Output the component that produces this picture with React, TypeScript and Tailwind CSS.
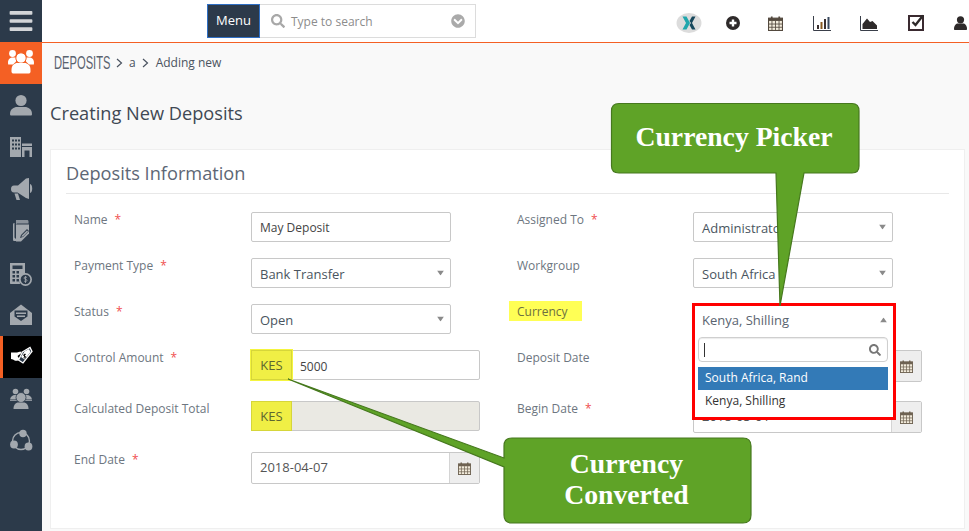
import React from "react";
import { FaBars, FaSearch, FaChevronCircleDown } from "react-icons/fa";

const Star = () => <span className="ml-[7px] text-[#f05050]">*</span>;

const Caret = ({ up = false }: { up?: boolean }) => (
  <svg width="7" height="5" viewBox="0 0 7 5" className="absolute right-[6px] top-1/2 -translate-y-1/2">
    <polygon points={up ? "0,5 7,5 3.5,0" : "0,0 7,0 3.5,5"} fill="#8a8a8a" />
  </svg>
);

const CalendarIcon = ({ size = 14, color = "#6e6252", fill = "#f3ecdc" }: { size?: number; color?: string; fill?: string }) => (
  <svg width={size} height={size} viewBox="0 0 14 14">
    <rect x="0.5" y="2" width="13" height="11.5" fill={fill} stroke={color} />
    <rect x="0.5" y="2" width="13" height="2.6" fill={color} />
    <path d="M3.5 0.5V3M10.5 0.5V3" stroke={color} strokeWidth="1.6" />
    <path d="M0.5 7.5H13.5M0.5 10.5H13.5M3.7 4.5V13.5M7 4.5V13.5M10.3 4.5V13.5" stroke={color} strokeWidth="0.8" />
  </svg>
);

const Label = ({ text, req }: { text: string; req?: boolean }) => (
  <div className="text-[12px] leading-[16px] text-[#6d7680] whitespace-nowrap">
    {text}
    {req && <Star />}
  </div>
);

const Select = ({ value }: { value: string }) => (
  <div className="relative w-[200px] h-[30px] bg-white border border-[#c8c8c8] rounded-[2px] flex items-center pl-[8px] pt-[3px] text-[13px] text-[#4a5560]">
    {value}
    <Caret />
  </div>
);

const TextBox = ({ value }: { value: string }) => (
  <div className="w-[200px] h-[30px] bg-white border border-[#c8c8c8] rounded-[2px] flex items-center pl-[8px] pt-[2px] text-[12px] text-[#444]">
    {value}
  </div>
);

const DateBox = ({ value }: { value: string }) => (
  <div className="w-[229px] h-[32px] bg-white border border-[#c8c8c8] rounded-[2px] flex text-[13px] text-[#555]">
    <div className="flex-1 flex items-center pl-[8px]">{value}</div>
    <div className="w-[30px] bg-[#eeeeee] border-l border-[#d4d4d4] flex items-center justify-center">
      <CalendarIcon size={13} />
    </div>
  </div>
);

const Amount = ({ value, disabled, ring }: { value?: string; disabled?: boolean; ring?: boolean }) => (
  <div className={`w-[229px] h-[30px] border border-[#c8c8c8] rounded-[2px] flex text-[12px] ${disabled ? "bg-[#eae9e3]" : "bg-white"}`}>
    <div className={`w-[41px] -ml-px -my-px bg-[#f0ef45] border-[#d6d63a] border flex items-center justify-center pt-[2px] text-[13px] text-[#5c6630] ${ring ? "outline outline-1 outline-[#f5f53f]" : ""}`}>
      KES
    </div>
    <div className="flex-1 flex items-center pl-[8px] pt-[3px] text-[#444]">{value}</div>
  </div>
);

const Row = ({ h, label, children }: { h: number; label: React.ReactNode; children: React.ReactNode }) => (
  <div className="flex" style={{ height: h }}>
    <div className="w-[177px]">{label}</div>
    <div className="relative">{children}</div>
  </div>
);

const NavIcon = ({ children, active, orange }: { children: React.ReactNode; active?: boolean; orange?: boolean }) => (
  <div className={`relative h-[42px] ${orange ? "bg-[#f46024]" : active ? "bg-black" : ""}`}>
    {active && <span className="absolute left-0 top-0 w-[3px] h-full bg-[#f46024]" />}
    <svg width="42" height="42" viewBox="0 0 42 42" fill={orange || active ? "#ffffff" : "#a3a8ae"}>
      {children}
    </svg>
  </div>
);

const BG = "#2c3a4a";

export default function App() {
  return (
    <div className="relative w-[969px] h-[531px] overflow-hidden flex bg-[#f9f9f9] font-['Open_Sans',sans-serif]">
      <aside className="w-[42px] h-full bg-[#2c3a4a] shrink-0">
        <div className="h-[42px] flex items-center justify-center">
          <FaBars className="text-[26px] text-[#d3d5d8]" />
        </div>
        <NavIcon orange>
          <circle cx="12.5" cy="11.5" r="3.4" />
          <circle cx="29.5" cy="11.5" r="3.4" />
          <path d="M8 21c0-4 2-5.5 5-5.5h3v4l-3 3H8.2ZM34 21c0-4-2-5.5-5-5.5h-3v4l3 3h4.8Z" />
          <circle cx="21" cy="16" r="5.2" stroke="#f46024" strokeWidth="1" />
          <path d="M11.5 28c0-5 3-7 6-7h7c3 0 6 2 6 7v1.5c0 1.5-1 2-2 2h-15c-1 0-2-.5-2-2Z" stroke="#f46024" strokeWidth="0" />
        </NavIcon>
        <NavIcon>
          <circle cx="21" cy="16.5" r="5.6" />
          <path d="M10 30c0-5 4-7 7-7h8c3 0 7 2 7 7 0 1-.5 1.5-1.5 1.5h-19C10.500 31.500 10 31 10 30Z" />
        </NavIcon>
        <NavIcon>
          <path d="M10 11h11v20H10Z" />
          <path d="M22 17.500h10v2.500H22ZM22 21h10v10h-2.500v-6.500h-5V31H22Z" />
          <g fill={BG}>
            <rect x="12" y="13.500" width="2" height="2" /><rect x="15" y="13.500" width="2" height="2" /><rect x="18" y="13.500" width="2" height="2" />
            <rect x="12" y="17.500" width="2" height="2" /><rect x="15" y="17.500" width="2" height="2" /><rect x="18" y="17.500" width="2" height="2" />
            <rect x="12" y="21.500" width="2" height="2" /><rect x="15" y="21.500" width="2" height="2" /><rect x="18" y="21.500" width="2" height="2" />
          </g>
        </NavIcon>
        <NavIcon>
          <path d="M26 10.500l3 -.5v21l-3-1-8.500-5.500H14c-2 0-3-1.500-3-3.500s1-3.500 3-3.500h4Z" />
          <path d="M30 16c1.500.5 2.200 2 2.200 4.500S31.500 24.500 30 25Z" />
          <path d="M14.500 25.500h3.500l2 6.500h-3.500Z" />
        </NavIcon>
        <NavIcon>
          <path d="M16 10h11c1 0 1.500.5 1.500 1.500v2H18c-1.500 0-2 .5-2 2Z" opacity="0.8" />
          <path d="M13 14.500c0-1 .5-1.500 1.500-1.500v14.500L18 31h-3.500C13.500 31 13 30.500 13 29.500Z" />
          <path d="M16 14.500h13v9l-8 8h-5Z" />
          <path d="M20 28l1-3 6-6 2 2-6 6Z" fill={BG} />
          <path d="M21.500 26.800l.4-1.300 5.100-5 1 1-5.100 5Z" />
        </NavIcon>
        <NavIcon>
          <path d="M10 11h15v12h-1a7 7 0 0 0-4 9H11c-.6 0-1-.4-1-1Z" />
          <g fill={BG}>
            <rect x="12.500" y="13.500" width="10" height="3.500" />
            <rect x="12.500" y="19" width="2.500" height="2.500" /><rect x="16.500" y="19" width="2.500" height="2.500" />
            <rect x="12.500" y="23" width="2.500" height="2.500" /><rect x="16.500" y="23" width="2.500" height="2.500" />
            <rect x="12.500" y="27" width="2.500" height="2.500" /><rect x="16.500" y="27" width="2.500" height="2.500" />
          </g>
          <circle cx="25.500" cy="27.500" r="6.500" />
          <circle cx="25.500" cy="27.500" r="4.800" fill={BG} />
          <path d="M27 25.500c-1-.8-3-.6-3 .6 0 1.500 3 .8 3 2.300 0 1.200-2 1.400-3 .6M25.500 24v7" stroke="#a3a8ae" strokeWidth="0.8" fill="none" />
        </NavIcon>
        <NavIcon>
          <path d="M21 10.500L32 19v12H10V19Z" />
          <path d="M14.500 16.500h13v6l-6.500 4.500-6.500-4.500Z" fill={BG} />
          <path d="M16 18.500h10v1.500H16ZM17 21.500h8v1.500h-8Z" />
        </NavIcon>
        <NavIcon active>
          <path d="M21.500 16.500L30 11.500l2 4 -9 11.500-4.500-3 4-8" fill={BG} stroke="#ffffff" strokeWidth="1.300" />
          <path d="M24.500 15.500L29 13l1.500 3-6 7.500-3.500-2.500Z" />
          <path d="M11 16.500h6l3.500-1 1 1.500-4 3 2 3-1.500 1.500c-2 .5-3 .5-5-1l-2-.5Z" />
          <path d="M24.500 18v3.500M26 18.500c-1-.5-2.500-.2-2.500.8s2.500.7 2.500 1.700-1.500 1.200-2.500.8" stroke="#000" strokeWidth="0.9" fill="none" />
        </NavIcon>
        <NavIcon>
          <circle cx="15.500" cy="13.500" r="2.800" />
          <circle cx="26.500" cy="13.500" r="2.800" />
          <path d="M10 21.500c.5-3 2.500-4.500 5-4.500h1.500l1 3-2 1.500ZM32 21.500c-.5-3-2.500-4.500-5-4.500h-1.500l-1 3 2 1.500Z" />
          <path d="M10 22h22v.8H10Z" />
          <circle cx="21" cy="19.500" r="5" stroke={BG} strokeWidth="0.8" />
          <path d="M13.500 31c0-4 2-6.500 5-6.500h5c3 0 5 2.500 5 6.500Z" />
        </NavIcon>
        <NavIcon>
          <circle cx="21" cy="21" r="8.500" fill="none" stroke="#a3a8ae" strokeWidth="1.400" />
          <circle cx="23" cy="13.500" r="3.700" />
          <circle cx="14" cy="24.500" r="3.900" />
          <circle cx="28.500" cy="26.500" r="3.900" />
        </NavIcon>
      </aside>

      <div className="flex-1 min-w-0 flex flex-col">
        <header className="h-[43px] shrink-0 bg-white border-b border-[#f46024] relative flex items-center">
          <div className="ml-[165px] flex h-[34px]">
            <div className="w-[53px] bg-[#2c3a4a] border border-[#2f6fc4] text-white text-[13px] font-medium flex items-center justify-center">Menu</div>
            <div className="w-[216px] border border-[#dcdcdc] border-l-0 flex items-center pl-[11px] pr-[10px] text-[12px] text-[#8c8c8c]">
              <FaSearch className="text-[14px] text-[#a8a8a8] mr-[6px]" />
              <span className="flex-1 pt-[2px]">Type to search</span>
              <FaChevronCircleDown className="text-[14px] text-[#aaa]" />
            </div>
          </div>
          <div className="absolute left-[634px] top-[13px] flex items-center text-[#2e2a2a]">
            <svg width="26" height="20" viewBox="0 0 26 20">
              <ellipse cx="13" cy="10" rx="12.500" ry="10" fill="#dcdcdc" />
              <path d="M6.500 3.500L10.500 3.500L14 10L10.500 16.500L6.500 16.500L10 10Z" fill="#1fa6ac" />
              <path d="M19.500 3.500L16 3.500L13.500 8L15 10L13.500 12L16 16.500L19.500 16.500L16 10Z" fill="#17485c" />
            </svg>
            <svg width="14" height="14" viewBox="0 0 14 14" className="ml-[24px]">
              <circle cx="7" cy="7" r="7" fill="#2e2a2a" />
              <path d="M7 3.500v7M3.500 7h7" stroke="#fff" strokeWidth="2.400" />
            </svg>
            <span className="ml-[28px]"><CalendarIcon size={15} color="#544a3f" /></span>
            <svg width="18" height="15" viewBox="0 0 18 15" className="ml-[30px]">
              <path d="M0.500 0V14.500H18" stroke="#3a3f4a" fill="none" />
              <rect x="4" y="9" width="2" height="4" fill="#3a3030" />
              <rect x="7.500" y="6" width="2" height="7" fill="#8a5a20" />
              <rect x="11" y="3" width="2" height="10" fill="#3a3030" />
              <rect x="14.500" y="1" width="2" height="12" fill="#3a4a60" />
            </svg>
            <svg width="18" height="15" viewBox="0 0 18 15" className="ml-[29px]">
              <path d="M0.500 0V14.500H18" stroke="#3a3f4a" fill="none" />
              <path d="M2.500 13V8L7 2.500L10 6L12.500 5L17 9.500V13Z" fill="#2e2a2a" />
            </svg>
            <svg width="18" height="18" viewBox="0 0 18 18" className="ml-[30px] -mt-[2px]">
              <rect x="1" y="3" width="14" height="14" fill="none" stroke="#3a2a30" strokeWidth="2" />
              <path d="M4.500 9l3 3L15 2.500" fill="none" stroke="#2e2a2a" strokeWidth="2.400" />
            </svg>
            <svg width="13" height="14" viewBox="0 0 13 14" className="ml-[28px]">
              <circle cx="6.500" cy="3.800" r="3.600" fill="#2e2a2a" />
              <path d="M0 13c0-3.500 2-5.500 4-5.500h5c2 0 4 2 4 5.500 0 .6-.4 1-1 1H1c-.6 0-1-.4-1-1Z" fill="#2e2a2a" />
            </svg>
          </div>
        </header>

        <div className="h-[41px] shrink-0 flex items-center pl-[12px] pb-[2px] text-[12px] text-[#4a5360]">
          <span className="inline-block origin-left scale-x-[0.62] w-[57px] text-[18px] leading-[20px] font-['Liberation_Sans',sans-serif] text-[#59626e] whitespace-nowrap">DEPOSITS</span>
          <svg width="7" height="10" viewBox="0 0 7 10" className="ml-[5px]"><path d="M1 1l4.500 4L1 9" fill="none" stroke="#4a5360" strokeWidth="1.200" /></svg>
          <span className="ml-[6px]">a</span>
          <svg width="7" height="10" viewBox="0 0 7 10" className="ml-[6px]"><path d="M1 1l4.500 4L1 9" fill="none" stroke="#4a5360" strokeWidth="1.200" /></svg>
          <span className="ml-[7px]">Adding new</span>
        </div>

        <h1 className="h-[65px] shrink-0 pl-[8px] pt-[16px] text-[18.200px] leading-[26px] text-[#3f4854]">Creating New Deposits</h1>

        <section className="ml-[8px] mr-[4px] h-[380px] shrink-0 bg-white border border-[#efefef] px-[15px]">
          <h2 className="h-[44px] pt-[10px] text-[18.200px] leading-[26px] text-[#5d6775] border-b border-[#e8e8e8]">Deposits Information</h2>
          <div className="flex pt-[18px]">
            <div className="w-[451px] pl-[8px]">
              <Row h={46} label={<Label text="Name" req />}><TextBox value="May Deposit" /></Row>
              <Row h={46} label={<Label text="Payment Type" req />}><Select value="Bank Transfer" /></Row>
              <Row h={46} label={<Label text="Status" req />}><Select value="Open" /></Row>
              <Row h={51} label={<Label text="Control Amount" req />}><Amount value="5000" ring /></Row>
              <Row h={51} label={<Label text="Calculated Deposit Total" />}><Amount disabled /></Row>
              <Row h={46} label={<Label text="End Date" req />}><DateBox value="2018-04-07" /></Row>
            </div>
            <div className="flex-1">
              <div className="flex h-[46px]"><div className="w-[176px]"><Label text="Assigned To" req /></div><Select value="Administrator" /></div>
              <div className="flex h-[46px]"><div className="w-[176px]"><Label text="Workgroup" /></div><Select value="South Africa" /></div>
              <div className="flex h-[46px]">
                <div className="w-[176px]">
                  <span className="-ml-[8px] -mt-[3px] block w-[73px] h-[20px] bg-[#ffff55] pl-[8px] text-[12px] leading-[22px] text-[#6d7040]">Currency</span>
                </div>
                <div className="relative">
                  <Select value="Kenya, Shilling" />
                  <div className="absolute -left-[1px] -top-[1px] w-[204px] h-[117px] z-10 bg-white border-[3px] border-[#ff0000]">
                    <div className="relative h-[28px] flex items-center pl-[7px] pt-[2px] text-[13px] text-[#5a6470]">
                      Kenya, Shilling
                      <Caret up />
                    </div>
                    <div className="ml-[3px] mr-[5px] mt-[3px] h-[25px] border border-[#cfcfcf] rounded-[4px] flex items-center justify-between pl-[5px] pr-[6px] shadow-[inset_0_1px_1px_rgba(0,0,0,0.08)]">
                      <span className="w-px h-[14px] bg-[#333]" />
                      <FaSearch className="text-[12px] text-[#777]" />
                    </div>
                    <div className="ml-[3px] mr-[5px] mt-[5px] h-[23px] bg-[#337ab7] text-white flex items-center pl-[7px] pb-[2px] text-[12px]">South Africa, Rand</div>
                    <div className="ml-[3px] mr-[5px] h-[23px] text-[#333] flex items-center pl-[7px] pb-[2px] text-[12px]">Kenya, Shilling</div>
                  </div>
                </div>
              </div>
              <div className="flex h-[51px]"><div className="w-[176px]"><Label text="Deposit Date" /></div><DateBox value="" /></div>
              <div className="flex h-[51px]"><div className="w-[176px]"><Label text="Begin Date" req /></div><DateBox value="2018-05-01" /></div>
            </div>
          </div>
        </section>
      </div>

      <svg width="969" height="531" className="absolute left-0 top-0 z-20 pointer-events-none">
        <path
          d="M619 103.500H852Q859 103.500 859 111V166Q859 173 852 173H804L780 306L776 173H619Q611.500 173 611.500 166V111Q611.500 103.500 619 103.500Z"
          fill="#5fa327"
          stroke="#46781e"
          strokeWidth="1.200"
        />
        <path
          d="M512 438H743Q751 438 751 446V515Q751 523 743 523H512Q504 523 504 515V467L288 379L504 458V446Q504 438 512 438Z"
          fill="#5fa327"
          stroke="#46781e"
          strokeWidth="1.200"
        />
      </svg>
      <div className="absolute z-30 left-[610px] top-[102px] w-[248px] h-[70px] flex items-center justify-center text-white font-bold text-[27.700px] font-['Liberation_Serif',serif]">Currency Picker</div>
      <div className="absolute z-30 left-[503px] top-[448px] w-[247px] text-center text-white font-bold text-[27.700px] leading-[31px] font-['Liberation_Serif',serif]">Currency<br />Converted</div>
    </div>
  );
}
